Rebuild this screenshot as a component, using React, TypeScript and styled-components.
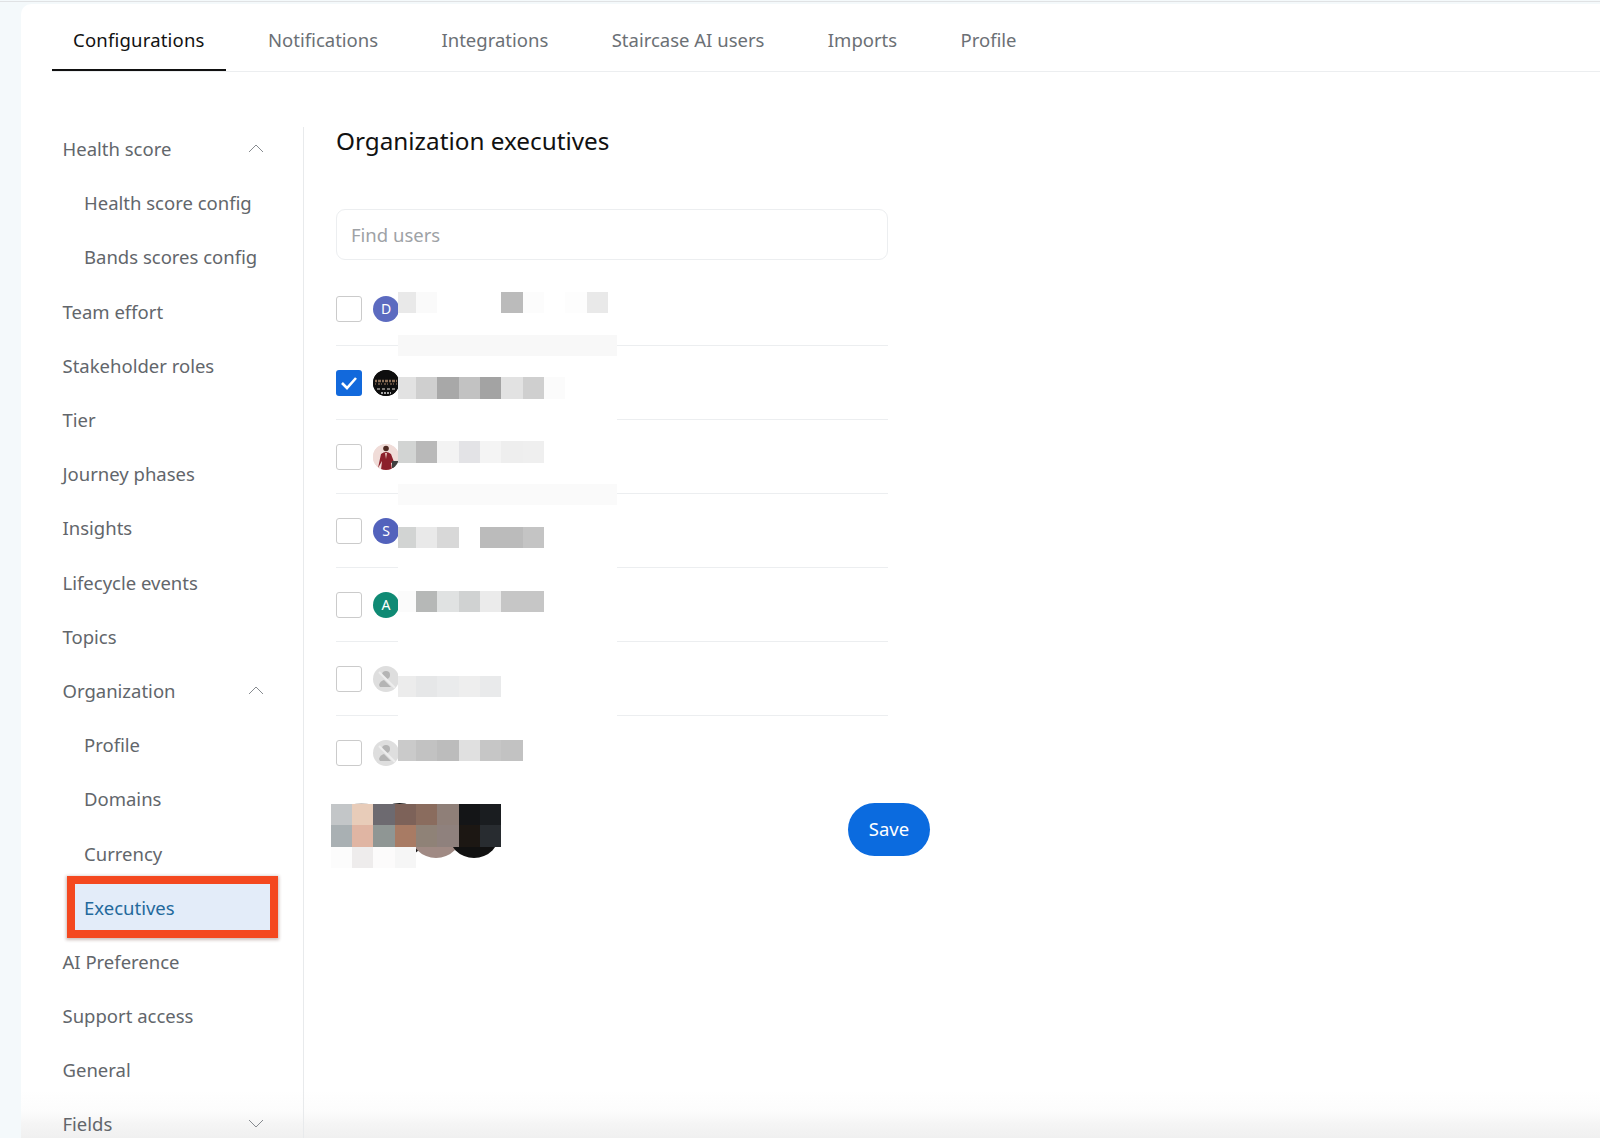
import React from "react";
import styled, { createGlobalStyle } from "styled-components";

const GlobalStyle = createGlobalStyle`
  html, body {
    margin: 0;
    height: 1138px;
    overflow: hidden;
    background: #f4f9fb;
    font-family: "Noto Sans", "Open Sans", sans-serif;
  }
`;

const Page = styled.div`
  height: 1137px;
  margin-top: 1px;
  overflow: hidden;
  padding: 2px 0 0 21px;
  box-sizing: border-box;
  border-top: 1px solid #e0e2e4;
`;

const Card = styled.div`
  height: 100%;
  background: linear-gradient(
    #fff 0,
    #fff calc(100% - 48px),
    #fcfcfc calc(100% - 26px),
    #f5f5f5 calc(100% - 14px),
    #f0f0f0 100%
  );
  border-top-left-radius: 10px;
  padding-left: 31px;
`;

const Tabs = styled.div`
  display: flex;
  height: 68px;
  box-sizing: border-box;
  gap: 21.4px;
  border-bottom: 1px solid #eceef0;
`;

const Tab = styled.div<{ $active?: boolean }>`
  padding: 4px 21px 0;
  height: 67px;
  box-sizing: border-box;
  display: flex;
  align-items: center;
  font-size: 18.5px;
  letter-spacing: ${(p) => (p.$active ? "0.2px" : "0")};
  color: ${(p) => (p.$active ? "#111" : "#6b7075")};
  box-shadow: ${(p) => (p.$active ? "inset 0 -2px 0 #111" : "none")};
`;

const Body = styled.div`
  display: flex;
  margin-top: 49.5px;
`;

const Sidebar = styled.nav`
  width: 251px;
  margin-top: 5px;
  flex-shrink: 0;
  border-right: 1px solid #e8eaec;

  & > :first-child {
    margin-top: -5px;
  }
`;

const NavItem = styled.div<{ $sub?: boolean }>`
  height: 54.2px;
  display: flex;
  align-items: center;
  justify-content: space-between;
  padding: 0 40px 0 ${(p) => (p.$sub ? "32px" : "10.5px")};
  font-size: 18.5px;
  color: #62666b;
`;

const ActiveItem = styled.div`
  height: 46px;
  margin: 4.1px 33px 4.1px 23px;
  padding-left: 9px;
  display: flex;
  align-items: center;
  font-size: 18.5px;
  color: #23699c;
  background: #e3ecf9;
  outline: 8.5px solid #f4481f;
  box-shadow: 0 1px 3px 9px rgba(90, 40, 30, 0.3);
`;

const Chevron = styled.svg`
  width: 16px;
  height: 9px;
  margin-right: -1px;
  fill: none;
  stroke: #878b90;
  stroke-width: 1;
`;

const Main = styled.main`
  flex: 1;
  padding-left: 32px;
`;

const Title = styled.h1`
  margin: 0;
  height: 40.5px;
  font-size: 24.3px;
  line-height: 37px;
  font-weight: 400;
  color: #111;
`;

const Search = styled.input`
  display: block;
  width: 552px;
  height: 51px;
  margin-top: 47px;
  padding: 0 14px 1px;
  box-sizing: border-box;
  border: 1px solid #eceef0;
  border-radius: 9px;
  font: 18.5px "Noto Sans", sans-serif;
  outline: none;

  &::placeholder {
    color: #9ea2a6;
  }
`;

const UserList = styled.div`
  position: relative;
  width: 552px;
  margin-top: 12px;
`;

const UserRow = styled.div<{ $divided: boolean }>`
  height: 74px;
  box-sizing: border-box;
  display: flex;
  align-items: center;
  gap: 11px;
  border-bottom: ${(p) => (p.$divided ? "1px solid #eceef0" : "none")};
`;

const Box = styled.div<{ $checked?: boolean }>`
  width: 26px;
  height: 26px;
  box-sizing: border-box;
  border-radius: 3px;
  display: flex;
  align-items: center;
  justify-content: center;
  border: ${(p) => (p.$checked ? "none" : "1.5px solid #cbcbcb")};
  background: ${(p) => (p.$checked ? "#1269dc" : "#fff")};
`;

const Avatar = styled.div<{ $bg?: string }>`
  width: 26px;
  height: 26px;
  border-radius: 50%;
  overflow: hidden;
  display: flex;
  align-items: center;
  justify-content: center;
  font-size: 14px;
  color: #fff;
  background: ${(p) => p.$bg || "#dedede"};
`;

const Mosaic = styled.div<{ $left: number; $top: number; $cols: string }>`
  position: absolute;
  left: ${(p) => p.$left}px;
  top: ${(p) => p.$top}px;
  display: grid;
  grid-template-columns: ${(p) => p.$cols};
  grid-auto-rows: 21.33px;
`;

const Cell = styled.div<{ $tone: string }>`
  background: ${(p) => p.$tone};
`;

const ActionBar = styled.div`
  position: relative;
  display: flex;
  align-items: flex-start;
  justify-content: space-between;
  width: 596px;
  height: 55px;
  margin: 13px 0 0 -2px;
`;

const Stack = styled.div`
  display: flex;
  align-items: flex-end;
  height: 55px;
`;

const StackFace = styled.div<{ $bg: string; $size: number }>`
  width: ${(p) => p.$size}px;
  height: ${(p) => p.$size}px;
  border-radius: 50%;
  background: ${(p) => p.$bg};
  margin-right: ${(p) => 38 - p.$size}px;
`;

const SaveButton = styled.button`
  width: 82px;
  height: 53px;
  padding: 0 0 2px;
  border: none;
  border-radius: 27px;
  background: #0b6bdf;
  color: #fff;
  font: 18.5px "Noto Sans", sans-serif;
`;

const tabs = ["Configurations", "Notifications", "Integrations", "Staircase AI users", "Imports", "Profile"];

const UP = "M1 8 L8 1 L15 8";
const DOWN = "M1 1 L8 8 L15 1";

const W = "#fff";
const T = "transparent";
// redaction blocks over the names, one line per 21px band
const nameBlocks: string[][] = [
  ["#e9e9e9", "#fafafa", W, W, W, "#bbbbbb", "#fcfcfc", W, "#fdfdfd", "#e9e9e9", W],
  [],
  Array(11).fill("#f8f8f8"),
  [],
  ["#e2e2e2", "#cfcfcf", "#a8a8a8", "#c2c2c2", "#a3a3a3", "#e2e2e2", "#cfcfcf", "#fbfbfb"],
  [],
  [],
  ["#d2d4d3", "#b9b9b9", "#f3f3f3", "#e3e3e6", "#f4f4f4", "#eeeeee", "#efefef"],
  [],
  Array(11).fill("#fafafa"),
  [],
  ["#d2d4d3", "#e9e9e9", "#d8d8d8", W, "#bbbbbb", "#bbbbbb", "#c4c4c4"],
  [],
  [],
  ["#fbfbfb", "#b6b8b7", "#e0e2e2", "#d0d2d2", "#ebebeb", "#c6c6c6", "#c6c6c6"],
  [],
  [],
  [],
  ["#ececec", "#e6e7e8", "#eaebec", "#eeeeee", "#e9eaeb"],
  [],
  Array(11).fill(T),
  ["#cacaca", "#c2c2c2", "#bcbcbc", "#e0e0e0", "#c6c6c6", "#c2c2c2", T, T, T, T, T],
];

const faceBlocks = [
  ["#c3c6c8", "#e8ccb9", "#6d6a70", "#7d6259", "#8a6c5e", "#8f7f78", "#141517", "#1a1d20"],
  ["#a9b0b3", "#e0b5a3", "#8f9694", "#a87b64", "#8f8277", "#8f817d", "#1c1713", "#282c30"],
  ["#fcfcfc", "#eeecec", "#fcfbfb", "#f6f6f6", T, T, T, T],
];

const Check = () => (
  <svg width="18" height="14" viewBox="0 0 18 14" fill="none" stroke="#fff" strokeWidth="2.6">
    <path d="M2 7 L7 12 L16 2" />
  </svg>
);

const CrowdPhoto = () => (
  <svg width="26" height="26" viewBox="0 0 26 26">
    <rect width="26" height="26" fill="#0e0e0e" />
    <path d="M2 11 H24" stroke="#8d7058" strokeWidth="2.5" strokeDasharray="2 1 3 1" />
    <path d="M2 14 H24" stroke="#5c4a3c" strokeWidth="2" strokeDasharray="1 2 2 1" />
    <path d="M4 19 H22" stroke="#7d7a76" strokeWidth="2" strokeDasharray="3 2" />
    <path d="M8 23 H18" stroke="#d8d8d8" strokeWidth="1.5" strokeDasharray="2 1" />
  </svg>
);

const RedJacketPhoto = () => (
  <svg width="26" height="26" viewBox="0 0 26 26">
    <rect width="26" height="26" fill="#f0dcd8" />
    <circle cx="13" cy="4.5" r="2.8" fill="#4f2a22" />
    <path d="M5 24 L8 10 Q13 6 18 10 L21 18 L18 19 L19 26 H8 L9 17 Z" fill="#8c1f2a" />
    <rect x="19" y="17" width="7" height="7" fill="#3f3f3f" />
    <path d="M12 9 L13 15 L14 9 Z" fill="#e8c8c0" />
  </svg>
);

const NoUserIcon = () => (
  <svg width="26" height="26" viewBox="0 0 26 26">
    <path d="M9 9 Q9 5 13 5 Q17 5 17 9 Q17 12 14 13 Z" fill="#b4b4b4" />
    <path d="M6 19 Q7 15 11 14 L18 21 H7 Z" fill="#b4b4b4" />
    <path d="M6 6 L22 22" stroke="#eeeeee" strokeWidth="2" />
  </svg>
);

const users: { checked?: boolean; bg?: string; face: React.ReactNode }[] = [
  { bg: "#5c6bc0", face: "D" },
  { checked: true, bg: "#0e0e0e", face: <CrowdPhoto /> },
  { bg: "#f0dcd8", face: <RedJacketPhoto /> },
  { bg: "#5262bc", face: "S" },
  { bg: "#0f8a74", face: "A" },
  { face: <NoUserIcon /> },
  { face: <NoUserIcon /> },
];

const padRow = (row: string[]) =>
  Array.from({ length: 11 }, (_, i) => row[i] || W);

export default function App() {
  return (
    <>
      <GlobalStyle />
      <Page>
        <Card>
          <Tabs>
            {tabs.map((t, i) => (
              <Tab key={t} $active={i === 0}>
                {t}
              </Tab>
            ))}
          </Tabs>
          <Body>
            <Sidebar>
              <NavItem>
                Health score
                <Chevron viewBox="0 0 16 9"><path d={UP} /></Chevron>
              </NavItem>
              <NavItem $sub>Health score config</NavItem>
              <NavItem $sub>Bands scores config</NavItem>
              <NavItem>Team effort</NavItem>
              <NavItem>Stakeholder roles</NavItem>
              <NavItem>Tier</NavItem>
              <NavItem>Journey phases</NavItem>
              <NavItem>Insights</NavItem>
              <NavItem>Lifecycle events</NavItem>
              <NavItem>Topics</NavItem>
              <NavItem>
                Organization
                <Chevron viewBox="0 0 16 9"><path d={UP} /></Chevron>
              </NavItem>
              <NavItem $sub>Profile</NavItem>
              <NavItem $sub>Domains</NavItem>
              <NavItem $sub>Currency</NavItem>
              <ActiveItem>Executives</ActiveItem>
              <NavItem>AI Preference</NavItem>
              <NavItem>Support access</NavItem>
              <NavItem>General</NavItem>
              <NavItem>
                Fields
                <Chevron viewBox="0 0 16 9"><path d={DOWN} /></Chevron>
              </NavItem>
            </Sidebar>
            <Main>
              <Title>Organization executives</Title>
              <Search placeholder="Find users" />
              <UserList>
                {users.map((u, i) => (
                  <UserRow key={i} $divided={i < users.length - 1}>
                    <Box $checked={u.checked}>{u.checked && <Check />}</Box>
                    <Avatar $bg={u.bg}>{u.face}</Avatar>
                  </UserRow>
                ))}
                <Mosaic $left={62} $top={20} $cols="18px 21px 22px 21px 21px 22px 21px 21px 22px 21px 9px">
                  {nameBlocks.map((row, r) =>
                    padRow(row).map((tone, c) => <Cell key={`${r}-${c}`} $tone={tone} />)
                  )}
                </Mosaic>
              </UserList>
              <ActionBar>
                <Stack>
                  <StackFace $bg="#cfc9c4" $size={55} />
                  <StackFace $bg="#1a1a1a" $size={55} />
                  <StackFace $bg="#a08a84" $size={52} />
                  <StackFace $bg="#111" $size={52} />
                </Stack>
                <SaveButton>Save</SaveButton>
                <Mosaic $left={-3} $top={1} $cols="21px 21px 22px 21px 21px 22px 21px 21px">
                  {faceBlocks.flat().map((tone, i) => (
                    <Cell key={i} $tone={tone} />
                  ))}
                </Mosaic>
              </ActionBar>
            </Main>
          </Body>
        </Card>
      </Page>
    </>
  );
}
